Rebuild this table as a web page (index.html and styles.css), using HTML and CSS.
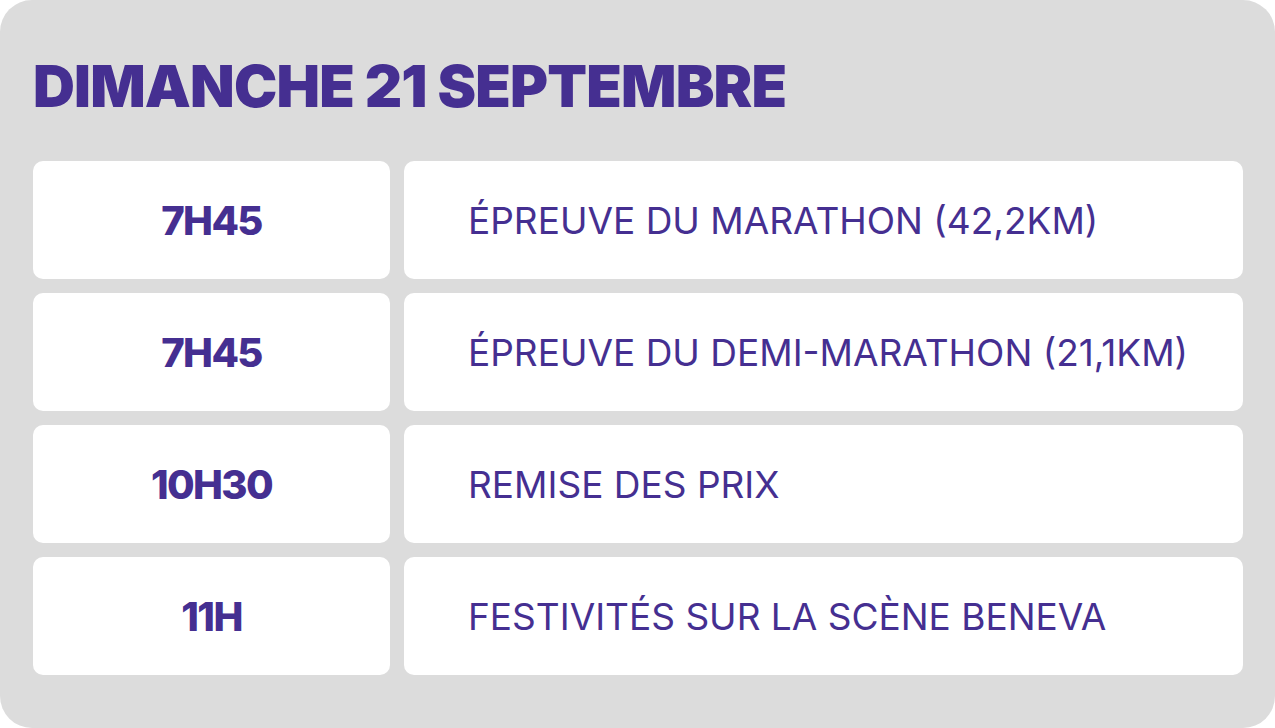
FILE: index.html
```html
<!DOCTYPE html>
<html lang="fr">
<head>
<meta charset="utf-8">
<title>Dimanche 21 septembre</title>
<link rel="stylesheet" href="styles.css">
</head>
<body>
<section class="panel">
  <h1 class="title">DIMANCHE 21 SEPTEMBRE</h1>
  <div class="schedule">
    <div class="time">7H45</div>
    <div class="event">ÉPREUVE DU MARATHON (42,2KM)</div>
    <div class="time">7H45</div>
    <div class="event">ÉPREUVE DU DEMI-MARATHON (21,1KM)</div>
    <div class="time">10H30</div>
    <div class="event">REMISE DES PRIX</div>
    <div class="time">11H</div>
    <div class="event">FESTIVITÉS SUR LA SCÈNE BENEVA</div>
  </div>
</section>
</body>
</html>
```
FILE: styles.css
```css
html, body {
  margin: 0;
  padding: 0;
  background: #ffffff;
}
.panel {
  box-sizing: border-box;
  width: 1275px;
  height: 728px;
  background: #dcdcdc;
  border-radius: 32px;
  padding: 52px 32px 54px 33px;
  font-family: Inter, "Liberation Sans", sans-serif;
  color: #452f91;
}
.title {
  margin: 0 0 41px 0;
  font-size: 58px;
  line-height: 68px;
  font-weight: 900;
  letter-spacing: -0.014em;
}
.schedule {
  display: grid;
  grid-template-columns: 357px 1fr;
  grid-auto-rows: 118px;
  column-gap: 14px;
  row-gap: 14px;
}
.time, .event {
  background: #ffffff;
  border-radius: 10px;
  display: flex;
  align-items: center;
}
.time {
  justify-content: center;
  font-size: 40px;
  font-weight: 800;
  letter-spacing: -0.04em;
}
.event {
  padding-left: 64px;
  font-size: 37px;
  font-weight: 400;
  letter-spacing: 0;
}
```
